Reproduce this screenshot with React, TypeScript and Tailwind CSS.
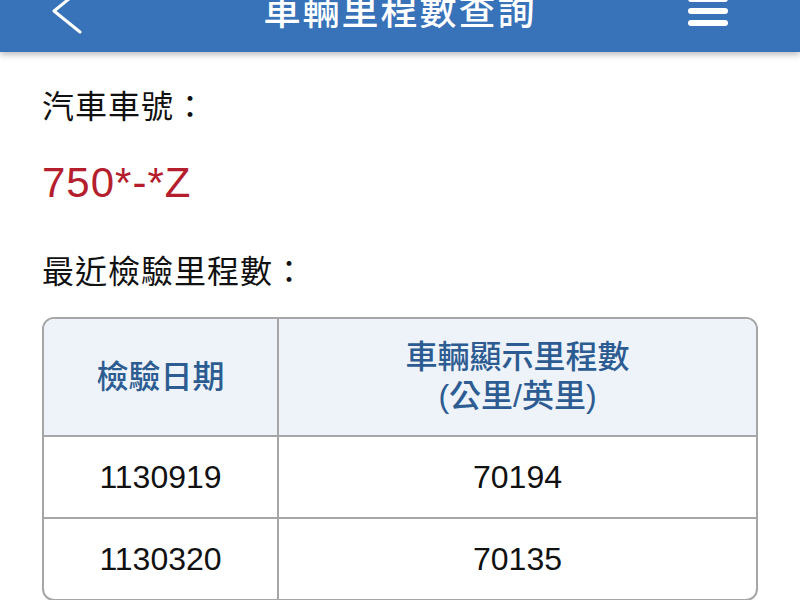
export default function App() {
  const rows = [
    { date: "1130919", km: "70194" },
    { date: "1130320", km: "70135" },
  ];

  return (
    <div className="h-[600px] w-[800px] overflow-hidden bg-white font-['Liberation_Sans','Noto_Sans_CJK_TC',sans-serif] text-[#111]">
      <header className="relative h-[52px] bg-[#3872b8] shadow-[0_3px_6px_rgba(0,0,0,0.25)]">
        <div className="flex h-[22px] items-center">
          <div className="flex w-[160px] items-center pl-[51px]">
            <svg width="32" height="46" viewBox="0 0 32 46" fill="none">
              <polyline
                points="29,2 3,23 29,44"
                stroke="white"
                strokeWidth="3"
                strokeLinecap="round"
                strokeLinejoin="round"
              />
            </svg>
          </div>
          <h1 className="flex-1 pt-[2px] text-center text-[37px] leading-none font-medium tracking-[2px] text-white">
            車輛里程數查詢
          </h1>
          <div className="flex w-[160px] items-center justify-end pr-[72px]">
            <div className="flex w-[40px] flex-col gap-[6px]">
              <span className="h-[6px] rounded-full bg-white" />
              <span className="h-[6px] rounded-full bg-white" />
              <span className="h-[6px] rounded-full bg-white" />
            </div>
          </div>
        </div>
      </header>

      <main className="px-[42px]">
        <div className="mt-[35px] flex h-[40px] items-center text-[32px] tracking-[1px]">
          汽車車號：
        </div>
        <div className="mt-[30px] flex h-[50px] items-center text-[42px] tracking-[1px] text-[#b41e2d]">
          750*-*Z
        </div>
        <div className="mt-[45px] flex h-[40px] items-center text-[32px] tracking-[1px]">
          最近檢驗里程數：
        </div>

        <div className="mt-[25px] overflow-hidden rounded-[12px] border-2 border-[#a6a6a6]">
          <div className="grid grid-cols-[235px_1fr] text-[32px]">
            <div className="flex h-[118px] items-center justify-center border-r-2 border-b-2 border-[#a6a6a6] bg-[#eef3fa] font-medium text-[#2c5c91]">
              檢驗日期
            </div>
            <div className="flex h-[118px] flex-col items-center justify-center border-b-2 border-[#a6a6a6] bg-[#eef3fa] leading-[39px] font-medium text-[#2c5c91]">
              <span>車輛顯示里程數</span>
              <span>(公里/英里)</span>
            </div>
            {rows.map((r, i) => (
              <div key={r.date} className="contents">
                <div
                  className={
                    i === 0
                      ? "flex h-[82px] items-center justify-center border-r-2 border-b-2 border-[#a6a6a6]"
                      : "flex h-[80px] items-center justify-center border-r-2 border-[#a6a6a6]"
                  }
                >
                  {r.date}
                </div>
                <div
                  className={
                    i === 0
                      ? "flex h-[82px] items-center justify-center border-b-2 border-[#a6a6a6]"
                      : "flex h-[80px] items-center justify-center"
                  }
                >
                  {r.km}
                </div>
              </div>
            ))}
          </div>
        </div>
      </main>
    </div>
  );
}
